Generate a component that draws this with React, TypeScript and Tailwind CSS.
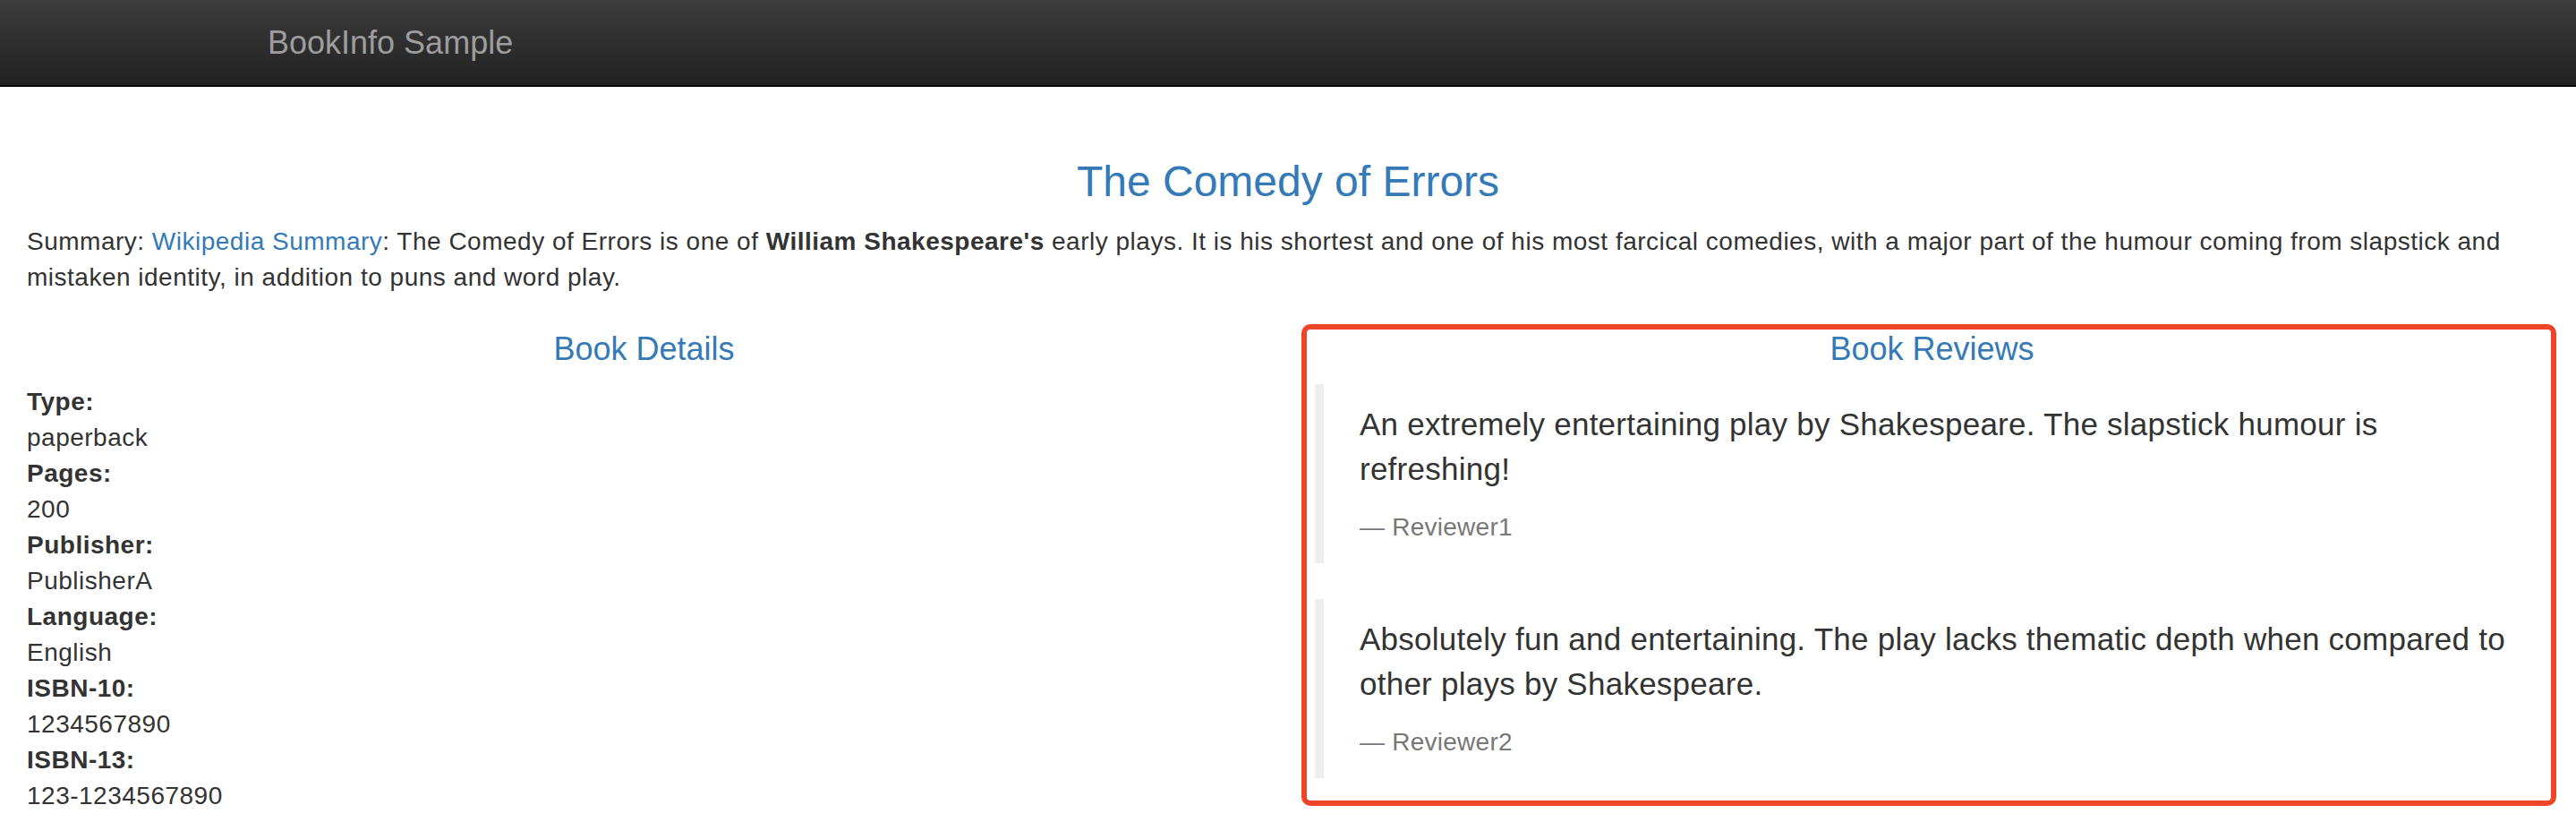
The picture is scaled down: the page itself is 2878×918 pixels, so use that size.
export default function App() {
  const details: [string, string][] = [
    ["Type:", "paperback"],
    ["Pages:", "200"],
    ["Publisher:", "PublisherA"],
    ["Language:", "English"],
    ["ISBN-10:", "1234567890"],
    ["ISBN-13:", "123-1234567890"],
  ];
  const reviews: [string, string][] = [
    ["An extremely entertaining play by Shakespeare. The slapstick humour is refreshing!", "Reviewer1"],
    ["Absolutely fun and entertaining. The play lacks thematic depth when compared to other plays by Shakespeare.", "Reviewer2"],
  ];
  return (
    <div className="min-h-screen bg-white text-[#333] font-['Liberation_Sans',Arial,sans-serif] text-[28px] leading-[40px] tracking-[0.5px]">
      <nav className="h-[97px] border-b-2 border-[#080808] bg-linear-to-b from-[#3c3c3c] to-[#222]">
        <div className="pl-[299px] h-[95px] flex items-center text-[36px] text-[#9d9d9d] tracking-normal">BookInfo Sample</div>
      </nav>
      <div className="px-[30px] pt-[80px]">
        <h3 className="text-center text-[48px] leading-[52.8px] text-[#337ab7] font-normal tracking-normal">The Comedy of Errors</h3>
        <p className="mt-[20px] mb-[20px]">
          Summary: <a className="text-[#337ab7]" href="#">Wikipedia Summary</a>: The Comedy of Errors is one of{" "}
          <b className="font-bold">William Shakespeare's</b> early plays. It is his shortest and one of his most farcical
          comedies, with a major part of the humour coming from slapstick and mistaken identity, in addition to puns and
          word play.
        </p>
        <div className="grid grid-cols-2 -mx-[30px]">
          <div className="px-[30px]">
            <h4 className="mt-[20px] mb-[20px] text-center text-[36px] leading-[39.6px] text-[#337ab7] font-normal tracking-normal">Book Details</h4>
            <dl>
              {details.map(([k, v]) => (
                <div key={k}>
                  <dt className="font-bold">{k}</dt>
                  <dd>{v}</dd>
                </div>
              ))}
            </dl>
          </div>
          <div className="px-[30px] relative">
            <h4 className="mt-[20px] mb-[20px] text-center text-[36px] leading-[39.6px] text-[#337ab7] font-normal tracking-normal">Book Reviews</h4>
            {reviews.map(([t, r]) => (
              <blockquote key={r} className="border-l-[10px] border-[#eee] px-[40px] py-[20px] mb-[40px] text-[35px] leading-[50px] tracking-[0.25px]">
                <p className="mb-[20px]">{t}</p>
                <small className="block text-[28px] leading-[40px] text-[#777]">{"\u2014\u00a0"}{r}</small>
              </blockquote>
            ))}
            <div className="absolute top-[12px] left-[15px] right-[22px] bottom-[9px] border-[6px] border-[#ee4427] rounded-[10px] pointer-events-none" />
          </div>
        </div>
      </div>
    </div>
  );
}
